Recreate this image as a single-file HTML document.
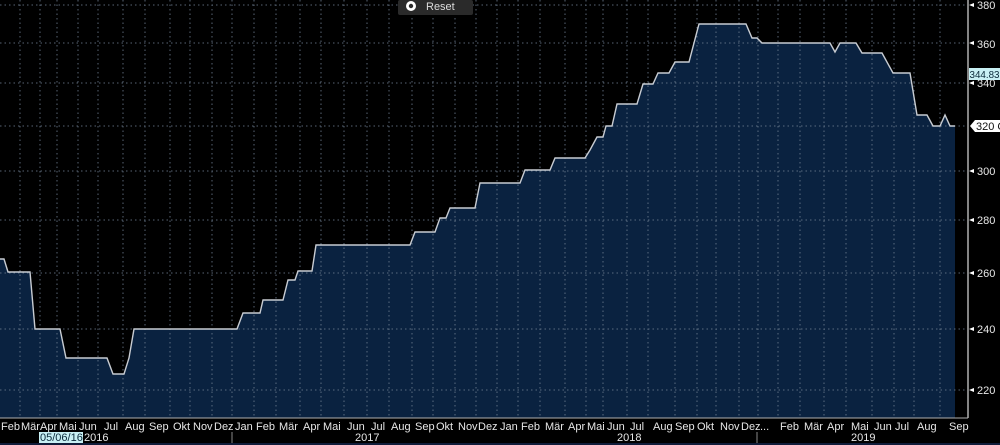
<!DOCTYPE html>
<html><head><meta charset="utf-8"><style>
html,body{margin:0;padding:0;background:#000;width:1000px;height:445px;overflow:hidden;font-family:"Liberation Sans",sans-serif}
svg{display:block}
</style></head><body>
<svg width="1000" height="445" viewBox="0 0 1000 445" xmlns="http://www.w3.org/2000/svg" font-family="Liberation Sans, sans-serif">
<rect width="1000" height="445" fill="#000"/>
<polygon fill="#0a2240" points="0,259 4,259 8,272 30,272 35,329 60,329 66,358 107,358 113,374 124,374 129,358 134,329 237,329 243,313 260,313 263,300 283,300 288,280 295,280 298,271 312,271 316,245 410,245 415,232 435,232 440,218 446,218 450,208 475,208 480,183 520,183 525,170 550,170 555,158 585,158 590,150 597,137 603,137 606,126 612,126 617,104 637,104 643,84 653,84 658,73 669,73 675,62 689,62 699,24 746,24 752,38 757,38 762,43 830,43 835,52 840,43 856,43 862,53 882,53 893,73 910,73 917,115 927,115 933,126 940,126 945,115 950,126 955,126 955,418 0,418"/>
<g stroke="#6f7f92" stroke-width="1" stroke-dasharray="1.5,3" opacity="0.8">
<line x1="0" x2="968" y1="5" y2="5"/><line x1="0" x2="968" y1="43" y2="43"/><line x1="0" x2="968" y1="83" y2="83"/><line x1="0" x2="968" y1="126" y2="126"/><line x1="0" x2="968" y1="171" y2="171"/><line x1="0" x2="968" y1="220" y2="220"/><line x1="0" x2="968" y1="273" y2="273"/><line x1="0" x2="968" y1="329" y2="329"/><line x1="0" x2="968" y1="390" y2="390"/>
<g>
<line x1="20" x2="20" y1="0" y2="418"/><line x1="40" x2="40" y1="0" y2="418"/><line x1="57" x2="57" y1="0" y2="418"/><line x1="78" x2="78" y1="0" y2="418"/><line x1="98" x2="98" y1="0" y2="418"/><line x1="123" x2="123" y1="0" y2="418"/><line x1="145" x2="145" y1="0" y2="418"/><line x1="170" x2="170" y1="0" y2="418"/><line x1="190" x2="190" y1="0" y2="418"/><line x1="212" x2="212" y1="0" y2="418"/><line x1="232" x2="232" y1="0" y2="418"/><line x1="254" x2="254" y1="0" y2="418"/><line x1="276" x2="276" y1="0" y2="418"/><line x1="300" x2="300" y1="0" y2="418"/><line x1="321" x2="321" y1="0" y2="418"/><line x1="344" x2="344" y1="0" y2="418"/><line x1="367" x2="367" y1="0" y2="418"/><line x1="389" x2="389" y1="0" y2="418"/><line x1="412" x2="412" y1="0" y2="418"/><line x1="433" x2="433" y1="0" y2="418"/><line x1="455" x2="455" y1="0" y2="418"/><line x1="476" x2="476" y1="0" y2="418"/><line x1="497" x2="497" y1="0" y2="418"/><line x1="518" x2="518" y1="0" y2="418"/><line x1="540" x2="540" y1="0" y2="418"/><line x1="565" x2="565" y1="0" y2="418"/><line x1="586" x2="586" y1="0" y2="418"/><line x1="603" x2="603" y1="0" y2="418"/><line x1="627" x2="627" y1="0" y2="418"/><line x1="648" x2="648" y1="0" y2="418"/><line x1="675" x2="675" y1="0" y2="418"/><line x1="697" x2="697" y1="0" y2="418"/><line x1="716" x2="716" y1="0" y2="418"/><line x1="739" x2="739" y1="0" y2="418"/><line x1="758" x2="758" y1="0" y2="418"/><line x1="778" x2="778" y1="0" y2="418"/><line x1="800" x2="800" y1="0" y2="418"/><line x1="824" x2="824" y1="0" y2="418"/><line x1="846" x2="846" y1="0" y2="418"/><line x1="872" x2="872" y1="0" y2="418"/><line x1="894" x2="894" y1="0" y2="418"/><line x1="914" x2="914" y1="0" y2="418"/><line x1="940" x2="940" y1="0" y2="418"/>
</g></g>
<polyline fill="none" stroke="#c8ccd2" stroke-width="1.4" points="0,259 4,259 8,272 30,272 35,329 60,329 66,358 107,358 113,374 124,374 129,358 134,329 237,329 243,313 260,313 263,300 283,300 288,280 295,280 298,271 312,271 316,245 410,245 415,232 435,232 440,218 446,218 450,208 475,208 480,183 520,183 525,170 550,170 555,158 585,158 590,150 597,137 603,137 606,126 612,126 617,104 637,104 643,84 653,84 658,73 669,73 675,62 689,62 699,24 746,24 752,38 757,38 762,43 830,43 835,52 840,43 856,43 862,53 882,53 893,73 910,73 917,115 927,115 933,126 940,126 945,115 950,126 955,126"/>
<line x1="968" x2="968" y1="0" y2="418" stroke="#b0b0b0" stroke-width="1.5"/>
<line x1="0" x2="968" y1="418" y2="418" stroke="#b0b0b0" stroke-width="1"/>
<g fill="#e8e8e8" font-size="11">
<text x="977" y="9">380</text><text x="977" y="48">360</text><text x="977" y="87">340</text><text x="977" y="175">300</text><text x="977" y="224">280</text><text x="977" y="277">260</text><text x="977" y="333">240</text><text x="977" y="394">220</text>
</g>
<g fill="#fff"><polygon points="969,5 974,3 974,7"/><polygon points="969,43 974,41 974,45"/><polygon points="969,83 974,81 974,85"/><polygon points="969,171 974,169 974,173"/><polygon points="969,220 974,218 974,222"/><polygon points="969,273 974,271 974,275"/><polygon points="969,329 974,327 974,331"/><polygon points="969,390 974,388 974,392"/></g>
<rect x="969" y="68" width="31" height="12" fill="#c8f0f4"/>
<text x="969.5" y="78" font-size="10" fill="#0a2a3a" textLength="30" lengthAdjust="spacingAndGlyphs">344.83</text>
<polygon points="970,126 975,120 1000,120 1000,132 975,132" fill="#fff"/>
<text x="976" y="130" font-size="11" fill="#111">320 GO</text>
<rect x="398" y="0" width="75" height="15" rx="2" fill="#2a2a2a"/>
<circle cx="411" cy="6" r="5" fill="#fff"/><circle cx="411" cy="6" r="2.2" fill="#2a2a2a"/>
<text x="426" y="10" font-size="11" fill="#ddd">Reset</text>
<g fill="#e6e6e6" font-size="11">
<text x="1" y="430">Feb</text><text x="21" y="430">Mär</text><text x="40" y="430">Apr</text><text x="59" y="430">Mai</text><text x="79" y="430">Jun</text><text x="104" y="430">Jul</text><text x="125" y="430">Aug</text><text x="149" y="430">Sep</text><text x="173" y="430">Okt</text><text x="193" y="430">Nov</text><text x="214" y="430">Dez</text><text x="235" y="430">Jan</text><text x="256" y="430">Feb</text><text x="279" y="430">Mär</text><text x="303" y="430">Apr</text><text x="323" y="430">Mai</text><text x="347" y="430">Jun</text><text x="371" y="430">Jul</text><text x="391" y="430">Aug</text><text x="415" y="430">Sep</text><text x="436" y="430">Okt</text><text x="458" y="430">Nov</text><text x="478" y="430">Dez</text>
<text x="500" y="430">Jan</text><text x="521" y="430">Feb</text><text x="545" y="430">Mär</text><text x="568" y="430">Apr</text><text x="587" y="430">Mai</text><text x="607" y="430">Jun</text><text x="630" y="430">Jul</text><text x="653" y="430">Aug</text><text x="675" y="430">Sep</text><text x="697" y="430">Okt</text><text x="720" y="430">Nov</text><text x="741" y="430">Dez</text><text x="760" y="430">...</text><text x="780" y="430">Feb</text><text x="804" y="430">Mär</text><text x="827" y="430">Apr</text><text x="851" y="430">Mai</text><text x="874" y="430">Jun</text><text x="895" y="430">Jul</text><text x="917" y="430">Aug</text><text x="949" y="430">Sep</text>
<text x="84" y="441">2016</text><text x="355" y="441">2017</text><text x="617" y="441">2018</text><text x="851" y="441">2019</text>
</g>
<rect x="39" y="432" width="44" height="11" fill="#c8f0f4"/>
<text x="40" y="441" font-size="11" fill="#0a2a3a">05/06/16</text>
<line x1="232" x2="232" y1="432" y2="444" stroke="#888"/>
<line x1="757" x2="757" y1="432" y2="444" stroke="#888"/>
<rect x="0" y="443" width="1000" height="2" fill="#101c3a"/>
</svg>
</body></html>
